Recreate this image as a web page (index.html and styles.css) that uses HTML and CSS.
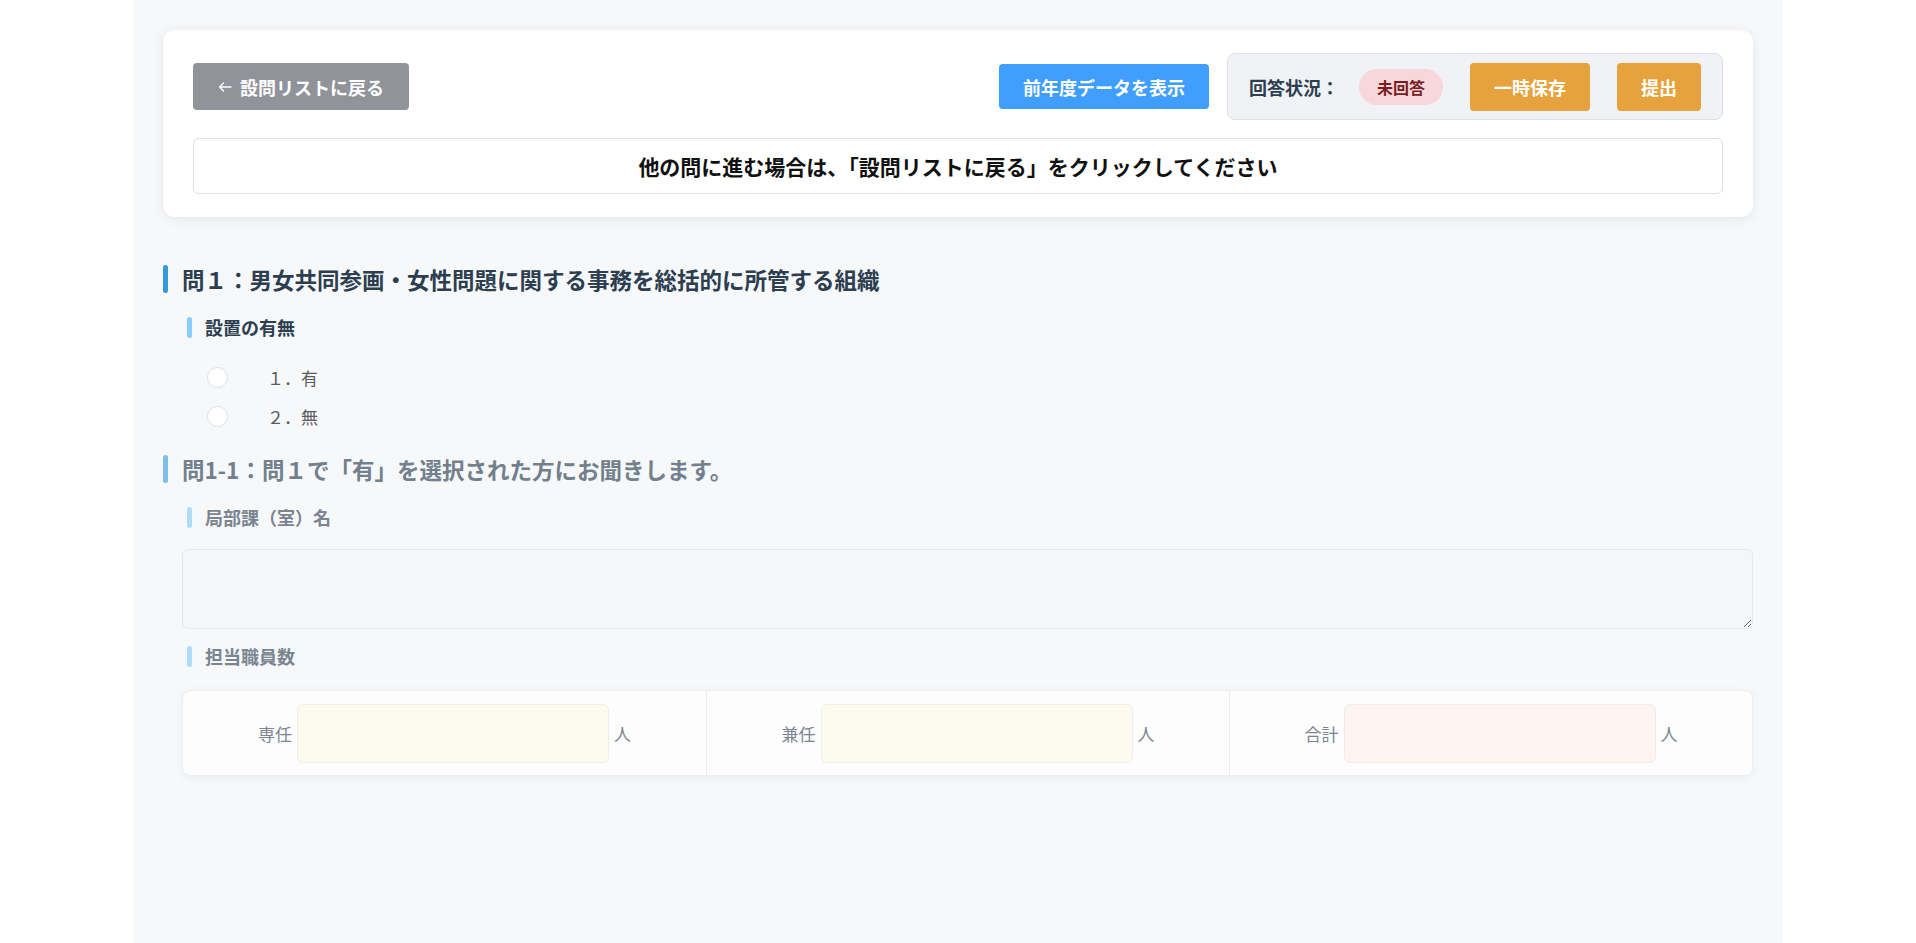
FILE: index.html
```html
<!DOCTYPE html>
<html lang="ja">
<head>
    <meta charset="utf-8">
    <title>設問回答</title>
    <link rel="stylesheet" href="styles.css">
</head>
<body>
    <div class="page">
        <div class="toolbar-card">
            <div class="toolbar-row">
                <button type="button" class="btn btn-back">
                    <svg class="back-icon" width="14" height="14" viewBox="0 0 14 14"><path d="M13 7H1.5M5.5 3L1.5 7l4 4" fill="none" stroke="#ffffff" stroke-width="1.4" stroke-linecap="round" stroke-linejoin="round"/></svg>
                    設問リストに戻る
                </button>
                <div class="toolbar-right">
                    <button type="button" class="btn btn-primary">前年度データを表示</button>
                    <div class="status-box">
                        <span class="status-label">回答状況：</span>
                        <span class="status-badge">未回答</span>
                        <button type="button" class="btn btn-warning">一時保存</button>
                        <button type="button" class="btn btn-warning">提出</button>
                    </div>
                </div>
            </div>
            <div class="notice">他の問に進む場合は、「設問リストに戻る」をクリックしてください</div>
        </div>

        <section class="question">
            <h2 class="q-title">問１：男女共同参画・女性問題に関する事務を総括的に所管する組織</h2>
            <h3 class="q-sub">設置の有無</h3>
            <div class="radio-list">
                <label class="radio"><span class="radio-dot"></span><span class="radio-text">１．有</span></label>
                <label class="radio"><span class="radio-dot"></span><span class="radio-text">２．無</span></label>
            </div>
        </section>

        <section class="question disabled">
            <h2 class="q-title">問1-1：問１で「有」を選択された方にお聞きします。</h2>
            <h3 class="q-sub">局部課（室）名</h3>
            <textarea class="answer-text" disabled></textarea>
            <h3 class="q-sub staff-sub">担当職員数</h3>
            <div class="staff-row">
                <div class="staff-cell">
                    <span class="staff-label">専任</span>
                    <input type="text" class="staff-input" disabled>
                    <span class="staff-unit">人</span>
                </div>
                <div class="staff-cell">
                    <span class="staff-label">兼任</span>
                    <input type="text" class="staff-input" disabled>
                    <span class="staff-unit">人</span>
                </div>
                <div class="staff-cell">
                    <span class="staff-label">合計</span>
                    <input type="text" class="staff-input total" disabled>
                    <span class="staff-unit">人</span>
                </div>
            </div>
        </section>
    </div>
</body>
</html>
```

FILE: styles.css
```css
body {
    margin: 0;
    background-color: #ffffff;
    font-family: "Noto Sans CJK JP", "Noto Sans", sans-serif;
    color: #2c3e50;
}

.page {
    width: 1650px;
    min-height: 943px;
    margin: 0 auto;
    padding: 30px 30px 40px;
    box-sizing: border-box;
    background-color: #f7f8fa;
}

/* top toolbar */
.toolbar-card {
    background-color: #ffffff;
    border-radius: 12px;
    box-shadow: 0 2px 12px rgba(0, 0, 0, 0.08);
    padding: 23px 30px;
}

.toolbar-row {
    display: flex;
    align-items: center;
    justify-content: space-between;
}

.toolbar-right {
    display: flex;
    align-items: center;
    gap: 18px;
}

.btn {
    display: inline-flex;
    align-items: center;
    justify-content: center;
    height: 46px;
    padding: 0 23px;
    border: none;
    border-radius: 4px;
    color: #ffffff;
    font-family: inherit;
    font-size: 18px;
    font-weight: 700;
    cursor: pointer;
}

.btn-back {
    height: 47px;
    background-color: #909399;
    padding: 0 25px;
}

.back-icon {
    margin-right: 8px;
}

.btn-primary {
    height: 45px;
    padding: 0 24px;
    background-color: #409eff;
}

.btn-warning {
    height: 48px;
    padding: 0 24px;
    background-color: #e6a23c;
    margin-left: 27px;
}

.status-box {
    display: flex;
    align-items: center;
    height: 65px;
    padding: 0 21px;
    background-color: #f0f2f5;
    border: 1px solid #dcdfe6;
    border-radius: 8px;
}

.status-label {
    font-size: 18px;
    font-weight: 700;
    color: #2c3e50;
    margin-right: 20px;
}

.status-badge {
    display: inline-flex;
    align-items: center;
    height: 36px;
    padding: 0 18px;
    border-radius: 18px;
    background-color: #f8d7da;
    color: #7a1c24;
    font-size: 16px;
    font-weight: 700;
}

.notice {
    margin-top: 18px;
    height: 54px;
    border: 1px solid #dcdfe6;
    border-radius: 6px;
    display: flex;
    align-items: center;
    justify-content: center;
    font-size: 21px;
    font-weight: 700;
    color: #111111;
}

/* questions */
.question {
    margin-top: 48px;
}

.question + .question {
    margin-top: 29px;
}

.q-title {
    position: relative;
    margin: 0;
    padding-left: 19px;
    font-size: 22.5px;
    line-height: 28px;
    font-weight: 700;
    color: #2c3e50;
}

.q-title::before {
    content: "";
    position: absolute;
    left: 0;
    top: 0;
    width: 5px;
    height: 28px;
    border-radius: 3px;
    background-color: #3498db;
}

.q-sub {
    position: relative;
    margin: 24px 0 0 24px;
    padding-left: 18px;
    font-size: 18px;
    line-height: 21px;
    font-weight: 700;
    color: #2c3e50;
}

.q-sub::before {
    content: "";
    position: absolute;
    left: 0;
    top: 0;
    width: 5px;
    height: 21px;
    border-radius: 3px;
    background-color: #87cefa;
}

/* disabled follow-up question */
.disabled .q-title {
    color: #72808d;
}

.disabled .q-title::before {
    background-color: #80bde8;
}

.disabled .q-sub {
    color: #7a8591;
}

.disabled .q-sub::before {
    background-color: #aedcf8;
}

.radio-list {
    margin: 29px 0 0 44px;
    display: flex;
    flex-direction: column;
    gap: 19px;
}

.radio {
    display: flex;
    align-items: center;
    height: 20px;
}

.radio-dot {
    width: 19px;
    height: 19px;
    border: 1px solid #dcdfe6;
    border-radius: 50%;
    background-color: #ffffff;
}

.radio-text {
    margin-left: 39px;
    font-size: 17px;
    color: #5a5c60;
}

.answer-text {
    display: block;
    width: 1571px;
    height: 80px;
    margin: 21px 0 0 19px;
    box-sizing: border-box;
    border: 1px solid #e6e8ec;
    border-radius: 6px;
    background-color: #f5f6f8;
    font-family: inherit;
}

.staff-sub {
    margin-top: 17px;
}

.staff-row {
    margin: 23px 0 0 19px;
    display: grid;
    grid-template-columns: 1fr 1fr 1fr;
    height: 86px;
    box-sizing: border-box;
    background-color: #fdfdfd;
    border: 1px solid #eceef1;
    border-radius: 8px;
    box-shadow: 0 2px 10px rgba(0, 0, 0, 0.05);
}

.staff-cell {
    display: flex;
    align-items: center;
    justify-content: center;
    gap: 5px;
}

.staff-cell + .staff-cell {
    border-left: 1px solid #e8eaed;
}

.staff-label,
.staff-unit {
    font-size: 17px;
    color: #7b8591;
}

.staff-input {
    width: 312px;
    height: 59px;
    box-sizing: border-box;
    border: 1px solid #efefe8;
    border-radius: 6px;
    background-color: #fdfbee;
}

.staff-input.total {
    background-color: #fdf3f1;
    border-color: #f0ecec;
}
```
